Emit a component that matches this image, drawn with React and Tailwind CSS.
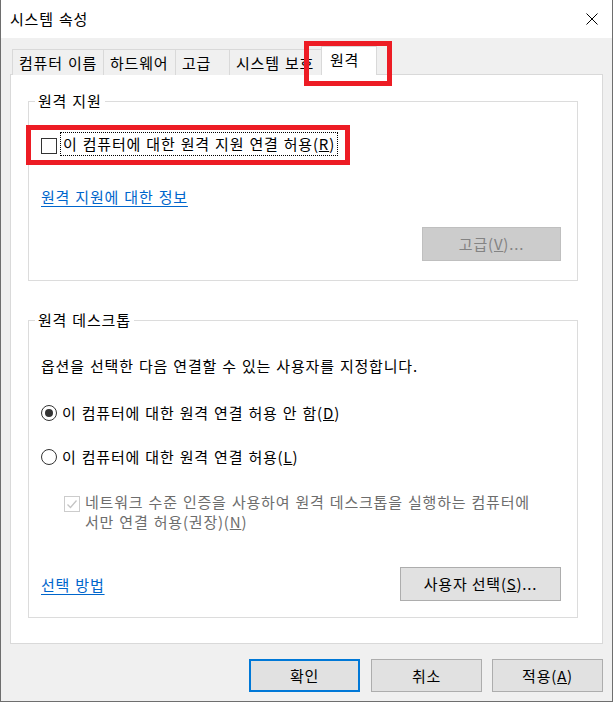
export default function App() {
  const tabs = [
    { label: "컴퓨터 이름", w: "w-[91px]" },
    { label: "하드웨어", w: "w-[72px]" },
    { label: "고급", w: "w-[54px]" },
    { label: "시스템 보호", w: "w-[92px]" },
  ]

  return (
    <div className="w-[613px] h-[702px] bg-[#f0f0f0] border-x border-b border-[#6e6e6e] flex flex-col font-['Noto_Sans_CJK_KR','Noto_Sans',sans-serif] text-[15px] leading-[20px] text-black tracking-[0.8px] [word-spacing:1px]">
      {/* title bar */}
      <div className="h-[38px] shrink-0 bg-white flex items-center justify-between pl-[9px] pr-[14px]">
        <span>시스템 속성</span>
        <svg width="12" height="12" viewBox="0 0 12 12">
          <path d="M0.5 0.5 L11.5 11.5 M11.5 0.5 L0.5 11.5" stroke="#000" strokeWidth="1" />
        </svg>
      </div>

      <div className="px-[9px] pt-[9px] flex flex-col">
        {/* tabs */}
        <div className="relative flex items-end h-[28px] pl-[2px] -mb-px z-10">
          {tabs.map((t) => (
            <div
              key={t.label}
              className={`${t.w} h-[26px] border-l border-t border-[#d9d9d9] bg-[#f0f0f0] pl-[6px] flex items-center whitespace-nowrap overflow-hidden`}
            >
              {t.label}
            </div>
          ))}
          <div className="w-[56px] h-[29px] border-x border-t border-[#d9d9d9] bg-white pl-[8px] pb-[3px] flex items-center">
            원격
          </div>
          <div className="absolute left-[294px] top-[-6px] w-[88px] h-[45px] border-[5px] border-[#ed1c24]" />
        </div>

        {/* panel */}
        <div className="h-[570px] border border-[#d9d9d9] bg-white flex flex-col pl-[17px] pr-[24px]">
          {/* remote assistance */}
          <div className="relative mt-[26px] h-[180px] border border-[#dcdcdc] flex flex-col pl-[12px]">
            <span className="absolute left-[6px] top-[-11px] px-[3px] bg-white">원격 지원</span>
            <div className="absolute left-[-3px] top-[23px] w-[324px] h-[40px] border-[5px] border-[#ed1c24]" />
            <div className="mt-[30px] flex items-start">
              <div className="mt-[6px] w-[16px] h-[16px] border border-[#333333] bg-white" />
              <div className="ml-[3px] h-[24px] px-[2px] flex items-center border border-dotted border-black whitespace-nowrap">
                이 컴퓨터에 대한 원격 지원 연결 허용(<u>R</u>)
              </div>
            </div>
            <a className="mt-[31px] self-start text-[#0066cc] underline underline-offset-[3px]">원격 지원에 대한 정보</a>
            <button className="mt-[20px] self-end mr-[16px] w-[139px] h-[34px] bg-[#cccccc] border border-[#bfbfbf] text-[#838383]">
              고급(<u>V</u>)...
            </button>
          </div>

          {/* remote desktop */}
          <div className="relative mt-[39px] h-[298px] border border-[#dcdcdc] flex flex-col pl-[12px]">
            <span className="absolute left-[6px] top-[-11px] px-[3px] bg-white">원격 데스크톱</span>
            <p className="mt-[35px]">옵션을 선택한 다음 연결할 수 있는 사용자를 지정합니다.</p>
            <div className="mt-[27px] flex items-center gap-[5px]">
              <div className="w-[16px] h-[16px] rounded-full border border-[#333333] flex items-center justify-center">
                <div className="w-[8px] h-[8px] rounded-full bg-[#333333]" />
              </div>
              <span>
                이 컴퓨터에 대한 원격 연결 허용 안 함(<u>D</u>)
              </span>
            </div>
            <div className="mt-[24px] flex items-center gap-[5px]">
              <div className="w-[16px] h-[16px] rounded-full border border-[#333333]" />
              <span>
                이 컴퓨터에 대한 원격 연결 허용(<u>L</u>)
              </span>
            </div>
            <div className="mt-[25px] ml-[23px] flex items-start gap-[5px] text-[#6d6d6d]">
              <div className="mt-[4px] w-[16px] h-[16px] border border-[#cccccc] flex items-center justify-center">
                <svg width="12" height="12" viewBox="0 0 12 12">
                  <path d="M1.5 6.5 L4.5 9.5 L10.5 2.5" stroke="#c4c4c4" strokeWidth="1.3" fill="none" />
                </svg>
              </div>
              <p className="whitespace-nowrap">
                네트워크 수준 인증을 사용하여 원격 데스크톱을 실행하는 컴퓨터에
                <br />
                서만 연결 허용(권장)(<u>N</u>)
              </p>
            </div>
            <div className="mt-[35px] flex items-center justify-between pr-[16px]">
              <a className="text-[#0066cc] underline underline-offset-[3px] mt-[2px]">선택 방법</a>
              <button className="w-[161px] h-[34px] bg-[#e1e1e1] border border-[#adadad]">
                사용자 선택(<u>S</u>)...
              </button>
            </div>
          </div>
        </div>

        {/* dialog buttons */}
        <div className="mt-[15px] flex justify-end">
          <button className="w-[111px] h-[33px] bg-[#e1e1e1] border-2 border-[#0078d7]">확인</button>
          <button className="ml-[11px] w-[111px] h-[33px] bg-[#e1e1e1] border border-[#adadad]">취소</button>
          <button className="ml-[10px] w-[111px] h-[33px] bg-[#e1e1e1] border border-[#adadad]">
            적용(<u>A</u>)
          </button>
        </div>
      </div>
    </div>
  )
}
